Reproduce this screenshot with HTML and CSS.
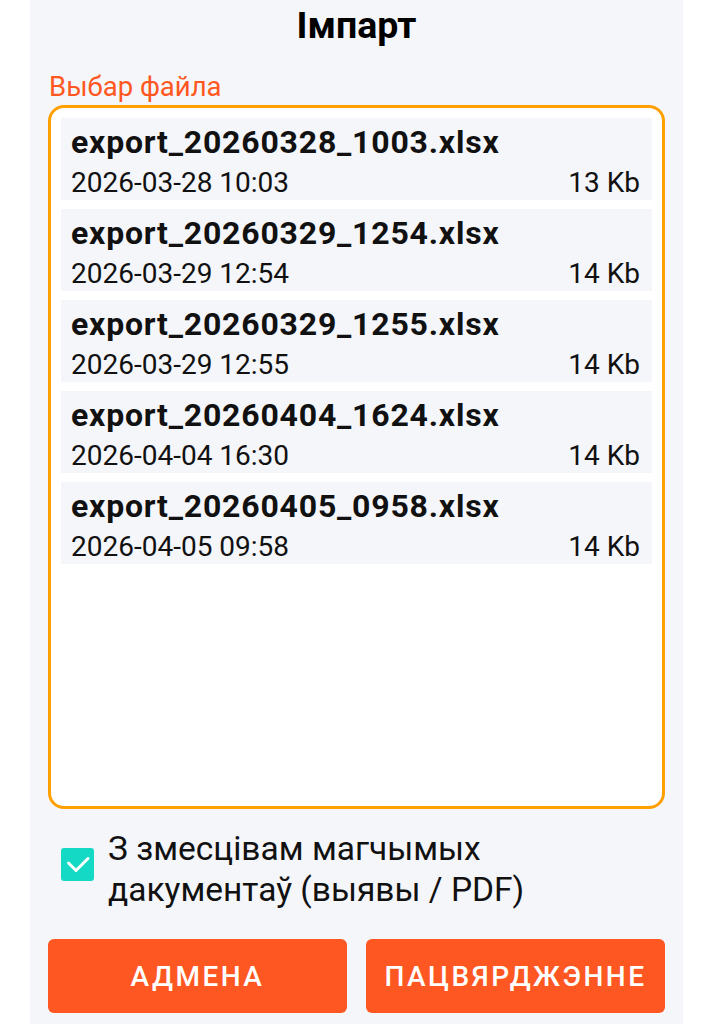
FILE: index.html
```html
<!DOCTYPE html>
<html lang="be">
<head>
  <meta charset="UTF-8" />
  <title>Імпарт</title>
  <meta name="viewport" content="width=device-width, initial-scale=1.0">
  <link rel="stylesheet" href="styles.css">
</head>
<body>
  <div class="sheet">
    <h1 class="title">Імпарт</h1>

    <div class="field-label">Выбар файла</div>
    <div class="file-box">
      <div class="file-list">
        <div class="file-item">
          <div class="file-name">export_20260328_1003.xlsx</div>
          <div class="file-meta"><span>2026-03-28 10:03</span><span>13 Kb</span></div>
        </div>
        <div class="file-item">
          <div class="file-name">export_20260329_1254.xlsx</div>
          <div class="file-meta"><span>2026-03-29 12:54</span><span>14 Kb</span></div>
        </div>
        <div class="file-item">
          <div class="file-name">export_20260329_1255.xlsx</div>
          <div class="file-meta"><span>2026-03-29 12:55</span><span>14 Kb</span></div>
        </div>
        <div class="file-item">
          <div class="file-name">export_20260404_1624.xlsx</div>
          <div class="file-meta"><span>2026-04-04 16:30</span><span>14 Kb</span></div>
        </div>
        <div class="file-item">
          <div class="file-name">export_20260405_0958.xlsx</div>
          <div class="file-meta"><span>2026-04-05 09:58</span><span>14 Kb</span></div>
        </div>
      </div>
    </div>

    <label class="check-row">
      <span class="checkbox">
        <svg viewBox="0 0 33 33" width="33" height="33">
          <path d="M7.5 15l7.5 7.5L27 10.5" fill="none" stroke="#fff" stroke-width="3" stroke-linecap="round" stroke-linejoin="round"/>
        </svg>
      </span>
      <span class="check-text">З змесцівам магчымых<br>дакументаў (выявы / PDF)</span>
    </label>

    <div class="actions">
      <button class="btn">Адмена</button>
      <button class="btn">Пацвярджэнне</button>
    </div>
  </div>
</body>
</html>
```

FILE: styles.css
```css
body {
  margin: 0;
  background: #fff;
  font-family: Roboto, "Noto Sans", sans-serif;
  color: #111;
}

.sheet {
  width: 653px;
  height: 1024px;
  margin-left: 30px;
  box-sizing: border-box;
  padding: 0 18px;
  background: #f5f6fa;
  display: flex;
  flex-direction: column;
}

.title {
  margin: 0;
  padding-top: 3px;
  font-size: 37.5px;
  line-height: 44px;
  font-weight: bold;
  text-align: center;
  color: #000;
}

.field-label {
  margin-top: 25px;
  padding-left: 1px;
  font-size: 27.5px;
  line-height: 30px;
  color: #ff5722;
}

.file-box {
  margin-top: 3px;
  height: 704px;
  box-sizing: border-box;
  padding: 10px;
  border: 3px solid #ffa000;
  border-radius: 16px;
  background: #fff;
}

.file-list {
  display: flex;
  flex-direction: column;
  gap: 9px;
}

.file-item {
  height: 82px;
  box-sizing: border-box;
  padding: 6px 12px 0 10px;
  background: #f5f6fa;
}

.file-name {
  font-size: 32px;
  line-height: 36px;
  font-weight: bold;
  letter-spacing: 0.8px;
}

.file-meta {
  margin-top: 6px;
  display: flex;
  justify-content: space-between;
  font-size: 28px;
  line-height: 34px;
}

.check-row {
  margin-top: 19px;
  padding-left: 13px;
  display: flex;
  align-items: flex-start;
  gap: 14px;
}

.checkbox {
  margin-top: 20px;
  width: 33px;
  height: 33px;
  flex: none;
  border-radius: 3px;
  background: #14d9c4;
}

.checkbox svg {
  display: block;
}

.check-text {
  font-size: 33.5px;
  line-height: 41px;
}

.actions {
  margin-top: 29px;
  display: flex;
  gap: 19px;
}

.btn {
  flex: 1;
  height: 74px;
  border: none;
  border-radius: 6px;
  background: #ff5722;
  color: #fff;
  font-family: Roboto, "Noto Sans", sans-serif;
  font-size: 28px;
  font-weight: 500;
  letter-spacing: 2.5px;
  text-transform: uppercase;
}
```
